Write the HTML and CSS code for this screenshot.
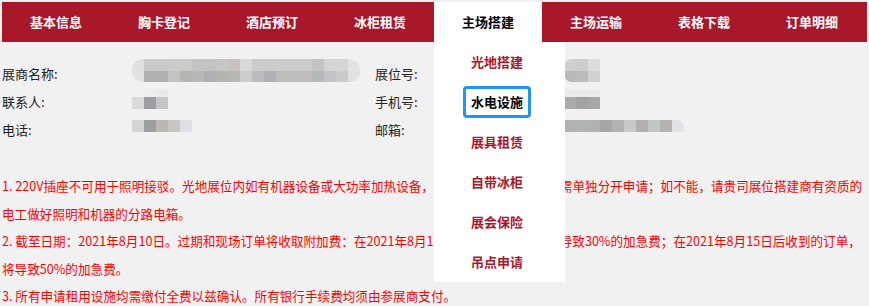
FILE: index.html
```html
<!DOCTYPE html>
<html lang="zh-CN">
<head>
  <meta charset="UTF-8">
  <meta name="viewport" content="width=device-width, initial-scale=1.0">
  <title>展商服务 - 水电设施</title>
  <link rel="stylesheet" href="styles.css">
</head>
<body>
  <div id="page">
    <nav class="main-nav">
      <a class="nav-item">基本信息</a>
      <a class="nav-item">胸卡登记</a>
      <a class="nav-item">酒店预订</a>
      <a class="nav-item">冰柜租赁</a>
      <div class="nav-item active">
        主场搭建
        <ul class="dropdown">
          <li><a>光地搭建</a></li>
          <li><a class="selected">水电设施</a></li>
          <li><a>展具租赁</a></li>
          <li><a>自带冰柜</a></li>
          <li><a>展会保险</a></li>
          <li><a>吊点申请</a></li>
        </ul>
      </div>
      <a class="nav-item">主场运输</a>
      <a class="nav-item">表格下载</a>
      <a class="nav-item">订单明细</a>
    </nav>

    <!-- exhibitor info (values are masked) -->
    <div class="info">
      <span class="label">展商名称:</span>
      <span class="value"><i class="mosaic m-name"></i></span>
      <span class="label">展位号:</span>
      <span class="value"><i class="mosaic m-booth"></i></span>

      <span class="label">联系人:</span>
      <span class="value"><i class="mosaic m-contact"></i></span>
      <span class="label">手机号:</span>
      <span class="value"><i class="mosaic m-mobile"></i></span>

      <span class="label">电话:</span>
      <span class="value"><i class="mosaic m-phone"></i></span>
      <span class="label">邮箱:</span>
      <span class="value"><i class="mosaic m-email"></i></span>
    </div>

    <div class="notes">
      <p>1. 220V插座不可用于照明接驳。光地展位内如有机器设备或大功率加热设备，照明电箱与机器电箱必需单独分开申请；如不能，请贵司展位搭建商有资质的电工做好照明和机器的分路电箱。</p>
      <p>2. 截至日期：2021年8月10日。过期和现场订单将收取附加费：在2021年8月11日-15日收到的订单将导致30%的加急费；在2021年8月15日后收到的订单，将导致50%的加急费。</p>
      <p>3. 所有申请租用设施均需缴付全费以兹确认。所有银行手续费均须由参展商支付。</p>
    </div>
  </div>
</body>
</html>
```

FILE: styles.css
```css
/* General Styling */
body {
  margin: 0;
  background: #f1f1f1;
  font-family: "Noto Sans CJK SC", "Noto Sans", sans-serif;
  color: #222;
}

#page {
  padding: 2px;
}

/* Top navigation */
.main-nav {
  display: flex;
  height: 40px;
  background: #a9172b;
}

.nav-item {
  position: relative;
  width: 108px;
  line-height: 40px;
  text-align: center;
  color: #fff;
  font-size: 13px;
  font-weight: bold;
  cursor: pointer;
}

.nav-item.active {
  background: #fff;
  color: #000;
}

.dropdown {
  position: absolute;
  top: 40px;
  left: 0;
  z-index: 10;
  width: 131px;
  margin: 0;
  padding: 0;
  list-style: none;
  background: #fff;
  text-align: left;
}

.dropdown li {
  height: 40px;
  display: flex;
  align-items: center;
  padding-left: 29px;
}

.dropdown a {
  display: inline-block;
  padding: 0 5px;
  line-height: 26px;
  border: 3px solid transparent;
  border-radius: 4px;
  color: #a9172b;
  font-weight: bold;
}

.dropdown a.selected {
  border-color: #1e96f3;
  color: #000;
}

/* Exhibitor info */
.info {
  display: grid;
  grid-template-columns: 130px 243px 189px 1fr;
  grid-auto-rows: 28px;
  align-items: center;
  padding-top: 17px;
  font-size: 13px;
}

.value {
  display: flex;
  align-items: center;
  height: 28px;
}

.mosaic {
  display: block;
  margin-bottom: 5px;
}

.m-name {
  width: 228px;
  height: 23px;
  border-radius: 11px;
  background:
    linear-gradient(to right, #e0e0e0 0 12px, #cacaca 12px 36px, #cdcccb 36px 60px, #c2c4c4 60px 84px, #c6c6c6 84px 96px, #c8c3c0 96px 108px, #d9d9d7 108px 120px, #cccccd 120px 180px, #c4c4c2 180px 192px, #d4d5d5 192px 216px, #e3e3e5 216px) top / 100% 12px no-repeat,
    linear-gradient(to right, #e2e2e2 0 12px, #b2b0af 12px 36px, #c5c3c2 36px 48px, #b5b5b8 48px 60px, #b9b8b8 60px 72px, #b0b0b2 72px 84px, #b5b4b3 84px 96px, #b8b8b6 96px 108px, #cdcdcb 108px 120px, #babbbe 120px 132px, #b0b1b5 132px 144px, #bebdbb 144px 180px, #b7b8b8 180px 192px, #c2c4c5 192px 204px, #cacbcb 204px 216px, #e1e1e1 216px) bottom / 100% 11px no-repeat;
}

.m-booth {
  width: 36px;
  height: 23px;
  border-radius: 8px 0 0 8px;
  background:
    linear-gradient(to right, #cfcfcf 0 12px, #cccdce 12px 24px, #dcdcdc 24px) top / 100% 12px no-repeat,
    linear-gradient(to right, #b9b9b9 0 12px, #bcbcbc 12px 24px, #d0d0d0 24px) bottom / 100% 11px no-repeat;
}

.m-contact {
  width: 36px;
  height: 20px;
  background:
    linear-gradient(to right, transparent 0 12px, #eeeeee 12px 24px, #e9eaec 24px) top / 100% 8px no-repeat,
    linear-gradient(to right, #ddd9d6 0 12px, #9e9ea2 12px 24px, #c4c5c9 24px) bottom / 100% 12px no-repeat;
}

.m-mobile {
  width: 36px;
  height: 20px;
  border-radius: 6px 0 0 0;
  background:
    linear-gradient(#ebebeb, #ebebeb) top / 100% 8px no-repeat,
    linear-gradient(to right, #a9acaf 0 12px, #a4a09d 12px 24px, #a8a8aa 24px) bottom / 100% 12px no-repeat;
}

.m-phone {
  width: 60px;
  height: 12px;
  margin-top: -1px;
  background: linear-gradient(to right, #d6d4d2 0 12px, #9d9ea0 12px 24px, #bbb8b4 24px 36px, #c8c7c3 36px 48px, #dde0e5 48px);
}

.m-email {
  width: 120px;
  height: 12px;
  margin-top: -1px;
  border-radius: 0 8px 0 0;
  background: linear-gradient(to right, #b2b2b2 0 12px, #b0b4b5 12px 24px, #b1b1b1 24px 36px, #a8a6a5 36px 48px, #b2b2b2 48px 60px, #c9c9c9 60px 72px, #b2afad 72px 84px, #c4c6c5 84px 96px, #b6b2b0 96px 108px, #dfe3e7 108px);
}

/* Notes */
.notes {
  margin-top: 29px;
  color: #ff0000;
  font-size: 12.6px;
  line-height: 27.5px;
}

.notes p {
  margin: 0;
}
```
